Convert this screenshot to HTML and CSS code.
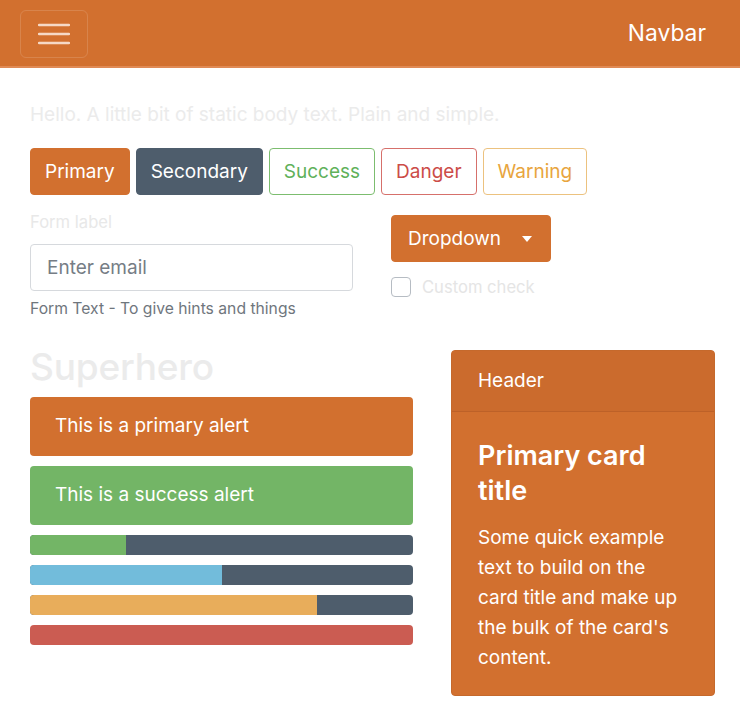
FILE: index.html
```html
<!DOCTYPE html>
<html lang="en">
<head>
<meta charset="utf-8">
<title>Superhero</title>
<link rel="stylesheet" href="styles.css">
</head>
<body>
<nav class="navbar">
  <button class="toggler" aria-label="Toggle navigation">
    <svg width="32" height="22" viewBox="0 0 32 22"><path d="M1 2H31M1 11H31M1 20H31" stroke="#f6d9c6" stroke-width="2.4" stroke-linecap="round"/></svg>
  </button>
  <span class="brand">Navbar</span>
</nav>
<main class="page">
  <p class="body-text">Hello. A little bit of static body text. Plain and simple.</p>
  <div class="btn-row">
    <button class="btn btn-primary">Primary</button>
    <button class="btn btn-secondary">Secondary</button>
    <button class="btn btn-outline-success">Success</button>
    <button class="btn btn-outline-danger">Danger</button>
    <button class="btn btn-outline-warning">Warning</button>
  </div>
  <div class="form-row">
    <div class="form-col">
      <label class="form-label">Form label</label>
      <input class="form-control" type="email" placeholder="Enter email">
      <div class="form-text">Form Text - To give hints and things</div>
    </div>
    <div class="side-col">
      <button class="btn btn-primary dropdown">Dropdown<span class="caret"></span></button>
      <label class="check"><span class="check-box"></span><span class="check-label">Custom check</span></label>
    </div>
  </div>
  <div class="main-row">
    <div class="left-col">
      <h1 class="title">Superhero</h1>
      <div class="alert alert-primary">This is a primary alert</div>
      <div class="alert alert-success">This is a success alert</div>
      <div class="progress"><div class="bar bar-success" style="width:25%"></div></div>
      <div class="progress"><div class="bar bar-info" style="width:50%"></div></div>
      <div class="progress"><div class="bar bar-warning" style="width:75%"></div></div>
      <div class="progress"><div class="bar bar-danger" style="width:100%"></div></div>
    </div>
    <div class="card">
      <div class="card-header">Header</div>
      <div class="card-body">
        <h4 class="card-title">Primary card title</h4>
        <p class="card-text">Some quick example text to build on the card title and make up the bulk of the card's content.</p>
      </div>
    </div>
  </div>
</main>
</body>
</html>
```
FILE: styles.css
```css
* { box-sizing: border-box; }
html, body { margin: 0; padding: 0; }
body {
  background: #ffffff;
  font-family: Inter, "Noto Sans", "Liberation Sans", sans-serif;
  font-size: 19px;
  line-height: 1.5;
  color: #ebebeb;
}
.navbar {
  height: 68px;
  background: #d2702f;
  border-bottom: 2px solid #e08a55;
  display: flex;
  align-items: center;
  justify-content: space-between;
  padding: 0 34px 0 20px;
}
.toggler {
  width: 68px;
  height: 48px;
  margin-top: 1px;
  background: transparent;
  border: 1px solid rgba(255,255,255,0.14);
  border-radius: 6px;
  display: flex;
  align-items: center;
  justify-content: center;
  padding: 0;
}
.brand {
  color: #ffffff;
  font-size: 22.8px;
  line-height: 30px;
}
.page {
  padding: 0 25px 0 30px;
}
.body-text {
  margin: 32px 0 0;
  font-size: 19px;
  line-height: 30px;
  color: #ebebeb;
}
.btn-row {
  display: flex;
  gap: 6px;
  margin-top: 18px;
}
.btn {
  font-family: inherit;
  font-size: 19px;
  line-height: 30px;
  height: 47px;
  padding: 0 14px;
  border-radius: 4px;
  border: 1.5px solid transparent;
  background: transparent;
}
.btn-primary { background: #d2702f; border-color: #d2702f; color: #fff; }
.btn-secondary { background: #4e5d6c; border-color: #4e5d6c; color: #fff; }
.btn-outline-success { border-color: #7cbd6f; color: #5fb15a; }
.btn-outline-danger { border-color: #d6706b; color: #cc4c48; }
.btn-outline-warning { border-color: #ecc27f; color: #e8a53e; }
.form-row {
  display: grid;
  grid-template-columns: 323px 200px;
  column-gap: 38px;
  margin-top: 14px;
}
.form-label {
  display: block;
  font-size: 16.6px;
  line-height: 26px;
  color: #e8e8e8;
  margin-top: 0;
}
.form-control {
  display: block;
  width: 323px;
  height: 47px;
  margin-top: 9px;
  border: 1.5px solid #d6d9dd;
  border-radius: 4px;
  padding: 0 16px;
  font-family: inherit;
  font-size: 19px;
  color: #333;
}
.form-control::placeholder { color: #767d85; }
.form-text {
  font-size: 15.7px;
  line-height: 25px;
  margin-top: 5px;
  color: #6f767d;
}
.side-col { padding-top: 6px; }
.dropdown {
  display: flex;
  align-items: center;
  width: 160px;
  padding: 0 16px;
}
.caret {
  margin-left: auto;
  width: 0; height: 0;
  border-left: 5.5px solid transparent;
  border-right: 5.5px solid transparent;
  border-top: 6px solid #fff;
  margin-right: 2px;
}
.check {
  display: flex;
  align-items: center;
  margin-top: 12px;
  gap: 11px;
}
.check-box {
  width: 20px; height: 20px;
  border: 1.5px solid #b6bcc3;
  border-radius: 4px;
}
.check-label {
  font-size: 16.6px;
  line-height: 26px;
  color: #e5e5e5;
}
.main-row {
  display: grid;
  grid-template-columns: 383px 264px;
  column-gap: 38px;
  margin-top: 24px;
  align-items: start;
}
.title {
  margin: 0;
  font-size: 37px;
  font-weight: 500;
  line-height: 44px;
  color: #ebebeb;
  letter-spacing: -0.2px;
}
.alert {
  height: 59px;
  border-radius: 4px;
  padding: 0 25px;
  display: flex;
  align-items: center;
  color: #fff;
  font-size: 19px;
  margin-top: 10px;
}
.alert-primary { background: #d2702f; margin-top: 8px; }
.alert-success { background: #73b566; }
.progress {
  height: 20px;
  background: #4e5d6c;
  border-radius: 4px;
  overflow: hidden;
  margin-top: 10px;
  display: flex;
}
.bar { height: 100%; }
.bar-success { background: #73b566; }
.bar-info { background: #72bcdb; }
.bar-warning { background: #e8ad5b; }
.bar-danger { background: #cb5c52; }
.card {
  margin-top: 5px;
  background: #d2702f;
  border: 1px solid #c5692c;
  border-radius: 4px;
  color: #fff;
  overflow: hidden;
}
.card-header {
  height: 61px;
  background: #cb6b2d;
  border-bottom: 1px solid #bd6128;
  padding: 0 26px;
  display: flex;
  align-items: center;
  font-size: 19px;
}
.card-body {
  padding: 26px 26px 22px;
}
.card-title {
  margin: 0;
  font-size: 27px;
  line-height: 35px;
  font-weight: 600;
}
.card-text {
  margin: 15px 0 0;
  font-size: 19px;
  line-height: 30px;
}
```
